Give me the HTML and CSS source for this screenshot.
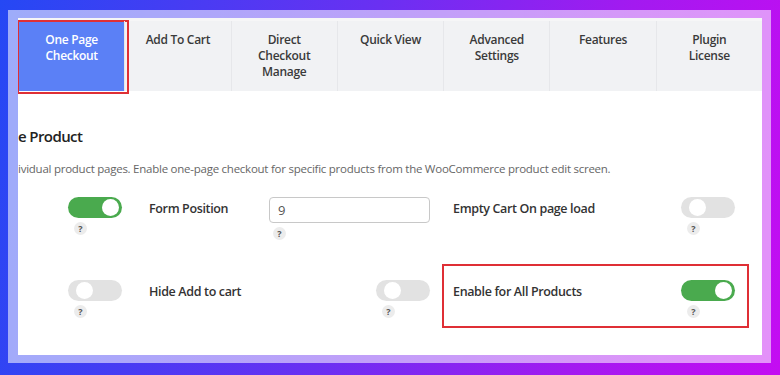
FILE: index.html
```html
<!DOCTYPE html>
<html>
<head>
<meta charset="utf-8">
<link rel="stylesheet" href="styles.css">
</head>
<body>
<div class="stage">
  <div class="frame">
    <div class="panel">
      <nav class="tabs">
        <div class="tab active">One Page<br>Checkout<span class="mark"></span></div>
        <div class="tab">Add To Cart</div>
        <div class="tab">Direct<br>Checkout<br>Manage</div>
        <div class="tab">Quick View</div>
        <div class="tab">Advanced<br>Settings</div>
        <div class="tab">Features</div>
        <div class="tab">Plugin<br>License</div>
      </nav>
      <h2 class="title">e Product</h2>
      <p class="desc">ividual product pages. Enable one-page checkout for specific products from the WooCommerce product edit screen.</p>
      <div class="grid">
        <div class="cell first">
          <div class="ctrl">
            <span class="toggle on"></span>
            <span class="help">?</span>
          </div>
        </div>
        <div class="cell">
          <span class="label">Form Position</span>
          <div class="ctrl">
            <div class="input">9</div>
            <span class="help">?</span>
          </div>
        </div>
        <div class="cell">
          <span class="label">Empty Cart On page load</span>
          <div class="ctrl">
            <span class="toggle"></span>
            <span class="help">?</span>
          </div>
        </div>
        <div class="cell first">
          <div class="ctrl">
            <span class="toggle"></span>
            <span class="help">?</span>
          </div>
        </div>
        <div class="cell">
          <span class="label">Hide Add to cart</span>
          <div class="ctrl">
            <span class="toggle"></span>
            <span class="help">?</span>
          </div>
        </div>
        <div class="cell highlight">
          <span class="label">Enable for All Products</span>
          <div class="ctrl">
            <span class="toggle on"></span>
            <span class="help">?</span>
          </div>
        </div>
      </div>
    </div>
  </div>
</div>
</body>
</html>
```

FILE: styles.css
```css
* { box-sizing: border-box; }
html, body { margin: 0; padding: 0; }
body { font-family: "Open Sans", "Noto Sans", sans-serif; }

.stage {
  width: 780px;
  height: 375px;
  background: linear-gradient(100deg, #2548f4 0%, #6a30f2 45%, #a31af0 75%, #c40cf2 100%);
  padding: 10px 9px 12px 8px;
}

.frame {
  height: 353px;
  background: rgba(255, 255, 255, 0.55);
  padding: 8px 9px 8px 10px;
}

.panel {
  height: 337px;
  background: #fff;
  overflow: hidden;
  padding-top: 3px;
  box-shadow: inset 0 3px 0 #f6f6f7;
}

.tabs {
  display: flex;
  height: 70px;
  background: #f1f2f4;
}

.tab {
  flex: 1;
  position: relative;
  padding-top: 11px;
  text-align: center;
  font-size: 12px;
  line-height: 16px;
  font-weight: 600;
  letter-spacing: -0.3px;
  color: #3a3a3a;
  border-left: 1px solid #e6e7ea;
}
.tab:first-child { border-left: 0; }

.tab.active {
  background: #5b80f6;
  color: #fff;
  margin-left: 1px;
}

.mark {
  position: absolute;
  left: -2px;
  top: -1px;
  right: -5px;
  bottom: -3px;
  border: 2px solid #df2f35;
}

.title {
  margin: 34px 0 0 0;
  font-size: 15px;
  line-height: 22px;
  font-weight: 600;
  letter-spacing: -0.6px;
  color: #222;
}

.desc {
  margin: 14px 0 0 0;
  font-size: 11.5px;
  line-height: 16px;
  letter-spacing: -0.25px;
  color: #666;
  white-space: nowrap;
}

.grid {
  display: grid;
  grid-template-columns: 121px 304px 305px;
  row-gap: 16px;
  margin-top: 5px;
}

.cell {
  display: flex;
  justify-content: space-between;
  align-items: flex-start;
  padding: 15px 13px 9px 10px;
}
.cell.first { justify-content: flex-end; padding-right: 17px; }

.highlight {
  outline: 2px solid #df2f35;
  outline-offset: -1px;
}

.label {
  margin-top: 3px;
  font-size: 12.5px;
  line-height: 18px;
  font-weight: 600;
  letter-spacing: -0.35px;
  color: #333;
}

.ctrl {
  display: flex;
  flex-direction: column;
  align-items: flex-start;
  gap: 4px;
}

.toggle {
  position: relative;
  display: block;
  width: 54px;
  height: 21px;
  border-radius: 11px;
  background: #e2e2e2;
}
.toggle::after {
  content: "";
  position: absolute;
  top: 2px;
  left: 8px;
  width: 17px;
  height: 17px;
  border-radius: 50%;
  background: #fff;
}
.toggle.on { background: #4aaa4e; }
.toggle.on::after { left: auto; right: 3px; }

.input {
  width: 161px;
  height: 26px;
  border: 1px solid #c8c8c8;
  border-radius: 4px;
  padding: 0 8px;
  font-size: 13px;
  line-height: 24px;
  color: #555;
}

.help {
  display: block;
  width: 13px;
  height: 13px;
  margin-left: 6px;
  border-radius: 50%;
  background: #ececec;
  font-size: 9px;
  line-height: 13px;
  font-weight: 700;
  text-align: center;
  color: #555;
}
.input + .help { margin-left: 4px; }
```
